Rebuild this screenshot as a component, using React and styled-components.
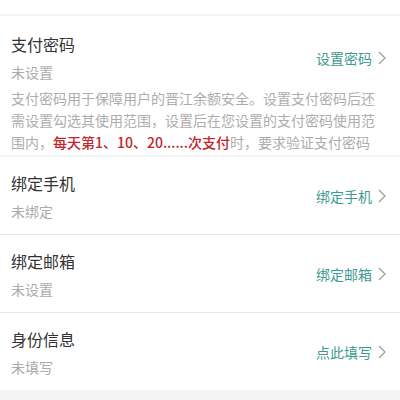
import React from "react";
import styled, { createGlobalStyle } from "styled-components";

const Global = createGlobalStyle`
  html, body { margin: 0; padding: 0; background: #f4f4f4; }
  body { font-family: "Noto Sans CJK SC", "Noto Sans", sans-serif; }
`;

const Page = styled.div`
  display: flex;
  flex-direction: column;
  gap: 2px;
  background: #f4f4f4;
`;

const TopStub = styled.div`
  height: 14px;
  background: #fff;
`;

const Card = styled.div`
  background: #fff;
  display: flex;
  flex-direction: column;
`;

const Row = styled.div`
  display: flex;
  flex-direction: column;
  padding: ${(p) => (p.$first ? "17px 14px 2px 11px" : "15px 14px 12px 11px")};
  border-top: ${(p) => (p.$divider ? "1px solid #e6e6e6" : "none")};
`;

const Head = styled.div`
  display: flex;
  align-items: center;
  justify-content: space-between;
`;

const Labels = styled.div`
  display: flex;
  flex-direction: column;
  gap: 6px;
`;

const Title = styled.div`
  font-size: 16px;
  line-height: 22px;
  color: #333;
`;

const Sub = styled.div`
  font-size: 14px;
  line-height: 22px;
  color: #ababab;
`;

const Action = styled.div`
  display: flex;
  align-items: center;
  gap: 6px;
  font-size: 14px;
  line-height: 22px;
  color: #3f9a92;
  margin-top: ${(p) => (p.$offset ? p.$offset : "0px")};
`;

const Desc = styled.p`
  margin: 4px 0 0;
  font-size: 14px;
  line-height: 22px;
  color: #adadad;
`;

const Red = styled.span`
  color: #c0262c;
  font-weight: 500;
`;

const Chevron = () => (
  <svg width="8" height="14" viewBox="0 0 8 14">
    <polyline points="1,1 7,7 1,13" fill="none" stroke="#9a9a9a" strokeWidth="1.2" />
  </svg>
);

const items = [
  { title: "绑定手机", sub: "未绑定", action: "绑定手机" },
  { title: "绑定邮箱", sub: "未设置", action: "绑定邮箱" },
  { title: "身份信息", sub: "未填写", action: "点此填写" },
];

export default function App() {
  return (
    <>
      <Global />
      <Page>
        <TopStub />
        <Card>
          <Row $first>
            <Head>
              <Labels>
                <Title>支付密码</Title>
                <Sub>未设置</Sub>
              </Labels>
              <Action>
                设置密码
                <Chevron />
              </Action>
            </Head>
            <Desc>
              支付密码用于保障用户的晋江余额安全。设置支付密码后还需设置勾选其使用范围，设置后在您设置的支付密码使用范围内，
              <Red>每天第1、10、20......次支付</Red>
              时，要求验证支付密码
            </Desc>
          </Row>
        </Card>
        <Card>
          {items.map((it, i) => (
            <Row key={it.title} $divider={i > 0}>
              <Head>
                <Labels>
                  <Title>{it.title}</Title>
                  <Sub>{it.sub}</Sub>
                </Labels>
                <Action $offset="-2px">
                  {it.action}
                  <Chevron />
                </Action>
              </Head>
            </Row>
          ))}
        </Card>
      </Page>
    </>
  );
}
